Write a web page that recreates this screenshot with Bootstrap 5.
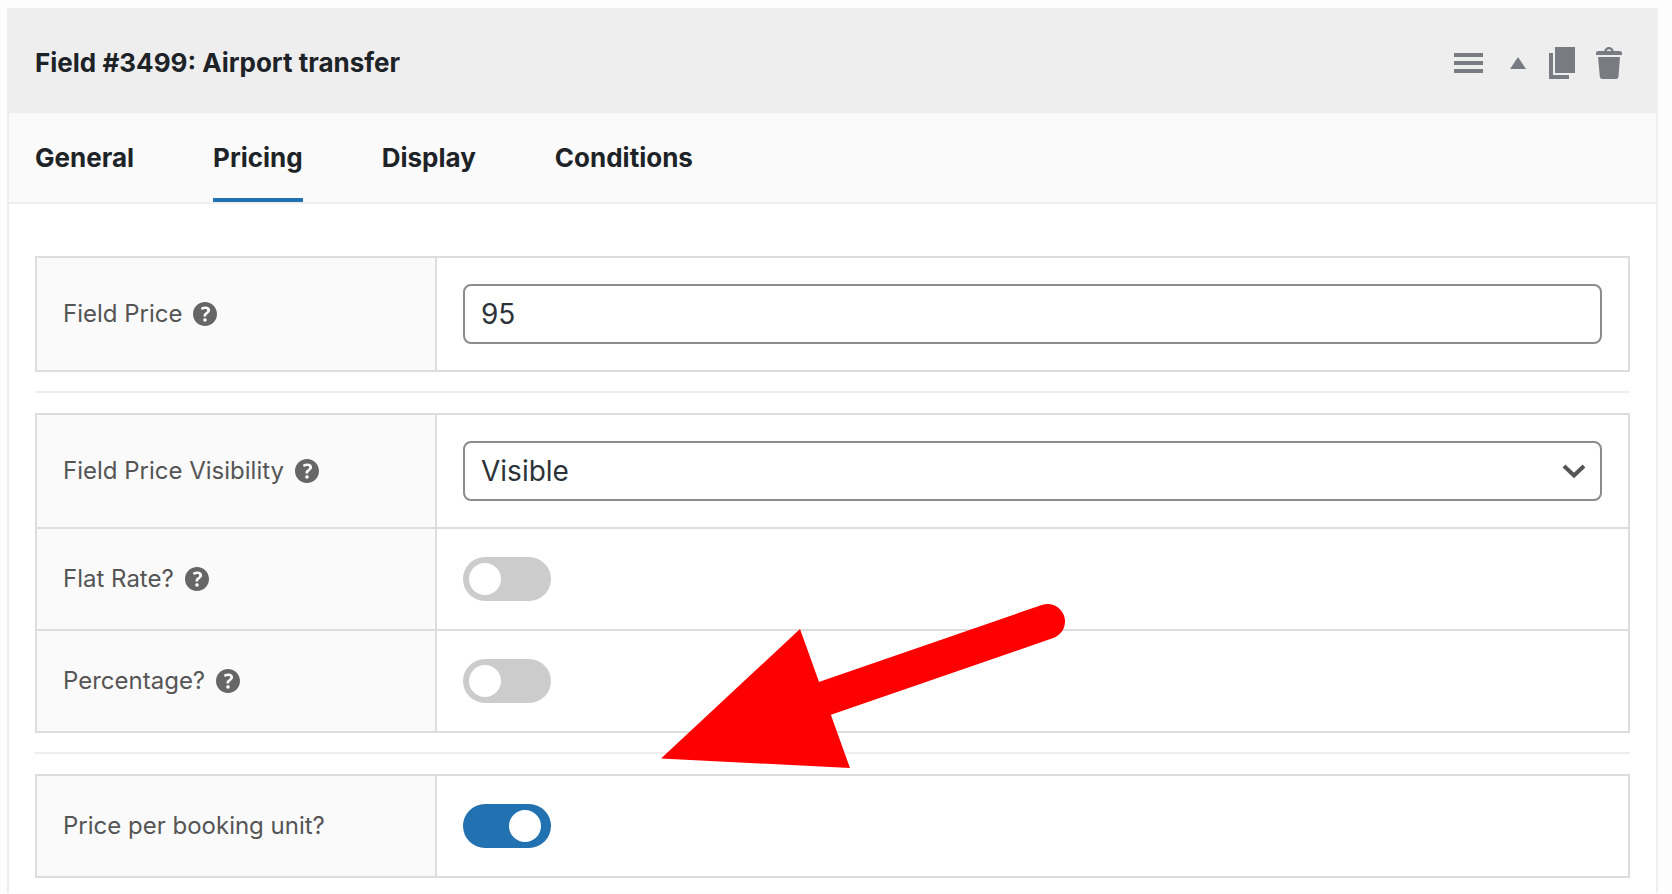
<!DOCTYPE html>
<html lang="en">
<head>
<meta charset="utf-8">
<meta name="viewport" content="width=device-width, initial-scale=1">
<title>Field #3499: Airport transfer</title>
<link href="https://cdn.jsdelivr.net/npm/bootstrap@5.3.0/dist/css/bootstrap.min.css" rel="stylesheet">
<style>
  body { font-family: Inter, "Liberation Sans", sans-serif; background: #fdfdfd; color: #1d2327; }
  .page { padding: 8px 14px 0 7px; }
  .panel { border: 2px solid #eee; border-width: 0 2px; background: #fff; }
  .panel-head { background: #eee; height: 105px; margin: 0 -2px; padding: 4px 31px 0 28px; }
  .panel-title { font-size: 26px; line-height: 32px; font-weight: 700; }
  .tool { border: 0; background: none; padding: 0; color: #787c82; display: flex; }
  .tool-move { margin-right: 26px; }
  .tool-fold { margin-right: 21px; }
  .tool svg, .help svg { display: block; fill: currentColor; }
  .tabs { background: #fafafa; border-bottom: 2px solid #eee; padding: 0 26px; gap: 79px; height: 91px; }
  .tab { border: 0; border-bottom: 4px solid transparent; background: none; padding: 4px 0 0; font-size: 26px; line-height: 32px; font-weight: 700; color: #1d2327; }
  .tab.active { border-color: #2271b1; }
  .fields { padding: 52px 26px 15px; }
  .box { border: 2px solid #ddd; }
  .line + .line { border-top: 2px solid #ddd; }
  .line-name { flex: 0 0 400px; background: #fafafa; border-right: 2px solid #ddd; padding: 0 26px; gap: 11px; font-size: 24px; line-height: 32px; color: #555; }
  .line-value { padding: 26px; min-height: 100px; }
  .help { border: 0; background: none; padding: 0; color: #666; }
  .entry, .entry:focus { font-size: 28px; line-height: 36px; height: 60px; padding: 0 16px; border: 2px solid #8c8c8c; border-radius: 8px; color: #2c3338; background-color: #fff; }
  select.entry { background-image: url("data:image/svg+xml,%3Csvg xmlns='http://www.w3.org/2000/svg' viewBox='0 0 24 16'%3E%3Cpath d='M2 3l10 9.500 10-9.500' fill='none' stroke='%23555' stroke-width='4'/%3E%3C/svg%3E"); background-size: 24px 16px; background-position: right 14px center; }
  .switch { appearance: none; width: 88px; height: 44px; border-radius: 22px; background: #ccc; margin: 0; padding: 6px; display: block; }
  .switch::before { content: ""; display: block; width: 32px; height: 32px; border-radius: 50%; background: #fff; }
  .switch:checked { background: #2271b1; }
  .switch:checked::before { margin-left: 40px; }
  .divider { margin: 19px 0 20px; border: 0; border-top: 2px solid #eee; opacity: 1; }
  .pointer { position: absolute; left: 652px; bottom: 107px; pointer-events: none; }
</style>
</head>
<body>
<main class="page">
  <section class="panel">
    <header class="panel-head d-flex align-items-center justify-content-between">
      <h1 class="panel-title m-0">Field #3499: Airport transfer</h1>
      <div class="d-flex align-items-center">
        <button class="tool tool-move" type="button" aria-label="Move"><svg width="32" height="32" viewBox="0 0 32 32"><path d="M2 6h29v4H2zM2 14h29v4H2zM2 22h29v4H2z"/></svg></button>
        <button class="tool tool-fold" type="button" aria-label="Collapse"><svg width="16" height="32" viewBox="0 0 16 32"><path d="M8 10l8 12H0z"/></svg></button>
        <button class="tool me-3" type="button" aria-label="Duplicate"><svg width="32" height="32" viewBox="0 0 32 32"><path d="M8 0h20v26H8zM2 6h4v22h16v4H2z"/></svg></button>
        <button class="tool" type="button" aria-label="Delete"><svg width="32" height="32" viewBox="0 0 32 32"><path d="M10 5q1-3.800 4-3.800T18 5" fill="none" stroke="currentColor" stroke-width="2.200"/><path d="M3.500 4h21Q27 4 27 6v2H1V6q0-2 2.500-2zM3 10h22l-1.500 19.500q-.2 2.500-2.500 2.500H7.500q-2.500 0-2.700-2.500z"/></svg></button>
      </div>
    </header>
    <nav class="tabs d-flex" role="tablist">
      <button class="tab" type="button" role="tab">General</button>
      <button class="tab active" type="button" role="tab" aria-selected="true">Pricing</button>
      <button class="tab" type="button" role="tab">Display</button>
      <button class="tab" type="button" role="tab">Conditions</button>
    </nav>
    <form class="fields position-relative">
      <svg class="d-none"><symbol id="help" viewBox="3 3 14 14"><path d="M17 10c0-3.870-3.140-7-7-7-3.870 0-7 3.130-7 7s3.130 7 7 7c3.860 0 7-3.130 7-7zm-6.300 1.480H9.140v-.43c0-.38.08-.7.24-.98s.46-.57.88-.89c.41-.29.68-.53.81-.71.14-.18.2-.39.2-.62 0-.25-.09-.44-.28-.58-.19-.13-.45-.19-.79-.19-.58 0-1.250.19-2 .57l-.64-1.280c.87-.49 1.800-.74 2.770-.74.81 0 1.450.2 1.920.58.480.39.710.91.710 1.550 0 .43-.09.8-.29 1.110-.19.32-.57.67-1.110 1.060-.38.28-.61.49-.71.63-.1.15-.15.34-.15.57v.35zm-1.470 2.740c-.18-.17-.27-.42-.27-.73 0-.33.08-.58.26-.75s.43-.25.77-.25c.32 0 .57.09.75.26s.27.42.27.74c0 .3-.09.55-.27.72-.18.18-.43.27-.75.27-.33 0-.58-.09-.76-.26z"/></symbol></svg>
      <div class="box">
        <div class="line d-flex">
          <div class="line-name d-flex align-items-center"><label for="price">Field Price</label><button class="help" type="button" aria-label="Help"><svg width="24" height="24"><use href="#help"/></svg></button></div>
          <div class="line-value flex-grow-1"><input class="form-control entry" id="price" type="text" value="95"></div>
        </div>
      </div>
      <hr class="divider">
      <div class="box">
        <div class="line d-flex">
          <div class="line-name d-flex align-items-center"><label for="visibility">Field Price Visibility</label><button class="help" type="button" aria-label="Help"><svg width="24" height="24"><use href="#help"/></svg></button></div>
          <div class="line-value flex-grow-1"><select class="form-select entry" id="visibility"><option>Visible</option></select></div>
        </div>
        <div class="line d-flex">
          <div class="line-name d-flex align-items-center"><label for="flat">Flat Rate?</label><button class="help" type="button" aria-label="Help"><svg width="24" height="24"><use href="#help"/></svg></button></div>
          <div class="line-value d-flex align-items-center flex-grow-1"><input class="switch" id="flat" type="checkbox" role="switch"></div>
        </div>
        <div class="line d-flex">
          <div class="line-name d-flex align-items-center"><label for="percentage">Percentage?</label><button class="help" type="button" aria-label="Help"><svg width="24" height="24"><use href="#help"/></svg></button></div>
          <div class="line-value d-flex align-items-center flex-grow-1"><input class="switch" id="percentage" type="checkbox" role="switch"></div>
        </div>
      </div>
      <hr class="divider">
      <div class="box">
        <div class="line d-flex">
          <div class="line-name d-flex align-items-center"><label for="unit">Price per booking unit?</label></div>
          <div class="line-value d-flex align-items-center flex-grow-1"><input class="switch" id="unit" type="checkbox" role="switch" checked></div>
        </div>
      </div>
      <svg class="pointer" width="406" height="186" viewBox="661 600 406 186" aria-hidden="true"><path d="M826 698L1047.500 621.500" stroke="#f00" stroke-width="35" stroke-linecap="round"/><path d="M661 758.500L800 629l50 139z" fill="#f00"/></svg>
    </form>
  </section>
</main>
<script src="https://cdn.jsdelivr.net/npm/bootstrap@5.3.0/dist/js/bootstrap.bundle.min.js"></script>
</body>
</html>
